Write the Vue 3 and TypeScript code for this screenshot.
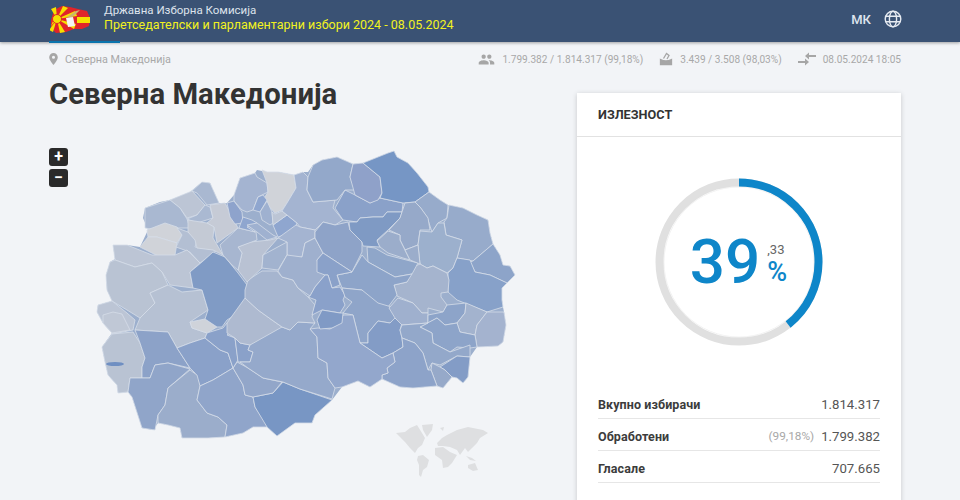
<script setup lang="ts">
interface Region {
  fill: string
  points: string
}

const outline = '257,170 267,172 278,172 294,175 303,172 308,172 313,165 322,160 337,157 353,164 363,163 378,157 388,153 394,151 397,157 408,163 417,173 428,187 429,192 440,200 448,205 463,208 477,215 488,220 490,233 493,244 500,255 503,265 510,266 515,275 507,283 502,288 502,300 503,307 504,312 506,325 503,342 498,346 477,347 470,357 468,377 463,383 457,378 452,377 443,388 437,386 413,388 400,387 382,379 370,387 358,381 342,387 332,400 315,415 312,423 295,422 277,436 267,427 253,427 243,433 225,437 217,433 208,438 182,438 180,428 168,425 158,423 153,430 142,428 132,397 128,392 118,393 117,385 108,375 105,362 102,347 112,333 103,323 97,312 98,305 112,301 107,290 106,275 110,262 115,259 113,245 127,245 140,247 148,230 143,218 145,208 160,202 170,200 190,192 202,182 210,183 219,203 227,203 234,195 240,178 255,173'

const regions: Region[] = [
  { fill: '#a9b8d1', points: '192,191 202,182 210,183 219,203 207,205 197,193' },
  { fill: '#bcc5d5', points: '170,200 192,191 205,205 197,215 187,218 180,208' },
  { fill: '#aab9d2', points: '205,205 210,207 213,218 197,223 187,219 197,215' },
  { fill: '#c6cbd6', points: '210,205 225,203 238,228 217,243 214,227 207,223 213,218' },
  { fill: '#a9b8d1', points: '145,208 170,200 180,208 187,219 190,228 177,228 157,230 145,228' },
  { fill: '#d0d3d9', points: '147,230 165,223 177,227 182,235 177,243 157,237 148,237' },
  { fill: '#d0d3d9', points: '148,237 157,237 177,243 175,255 160,257 140,247' },
  { fill: '#b3bfd3', points: '177,228 188,232 197,240 195,247 217,250 200,263 190,252 176,247 182,235' },
  { fill: '#c4cad5', points: '188,220 207,223 214,227 213,238 223,255 213,250 197,248 195,240 188,232' },
  { fill: '#bcc5d5', points: '113,245 127,245 152,255 175,255 187,250 200,263 190,272 193,288 170,285 162,272 152,263 135,267 115,260' },
  { fill: '#b9c3d3', points: '106,275 110,262 115,260 135,267 152,263 162,272 168,285 150,293 155,303 140,318 127,310 112,301 107,290' },
  { fill: '#b6c1d3', points: '150,293 168,285 182,292 202,290 208,310 190,322 192,328 207,333 205,338 190,343 177,348 168,332 135,330 140,318 155,303' },
  { fill: '#cfd3da', points: '190,322 205,319 217,327 207,333 192,328' },
  { fill: '#809bc5', points: '190,272 202,262 213,252 225,257 238,273 247,285 245,303 235,315 227,320 222,327 217,327 205,319 208,310 202,290 193,288' },
  { fill: '#bcc5d5', points: '97,312 98,305 112,301 127,313 135,320 133,330 113,334 103,323' },
  { fill: '#c0c8d6', points: '103,315 113,312 122,314 130,330 112,333 103,323' },
  { fill: '#b9c3d3', points: '112,334 133,332 140,343 145,358 142,367 142,378 130,378 128,392 118,393 117,385 108,375 105,362 102,347' },
  { fill: '#8ca2c8', points: '135,330 168,332 177,348 190,368 168,363 155,365 150,378 142,378 142,367 145,358 140,343' },
  { fill: '#8aa1c9', points: '177,348 190,343 205,338 220,350 228,353 233,368 213,380 200,386 195,373 190,368' },
  { fill: '#90a5c9', points: '142,378 150,378 155,365 168,363 190,369 168,388 165,405 158,415 155,430 142,428 132,397 128,392 130,378' },
  { fill: '#9badcb', points: '168,388 190,370 197,375 200,386 197,400 207,413 218,417 227,425 225,437 208,438 182,438 180,428 168,425 158,423 158,415 165,405' },
  { fill: '#90a5ca', points: '200,386 213,380 233,368 243,385 245,395 253,397 255,407 267,425 267,427 253,427 243,433 225,437 227,425 218,417 207,413 197,400' },
  { fill: '#7896c4', points: '253,397 273,393 283,382 300,389 332,400 315,415 312,423 295,423 277,436 267,427 255,407' },
  { fill: '#92a6c9', points: '237,362 248,368 263,378 282,382 273,393 253,397 245,395 243,385 233,368' },
  { fill: '#8aa1c9', points: '205,338 207,333 223,328 227,323 233,330 227,335 235,338 238,360 233,368 228,353 220,350' },
  { fill: '#8aa1c9', points: '235,338 240,343 250,345 248,350 253,352 250,362 238,362' },
  { fill: '#aebad0', points: '227,323 245,298 258,310 272,320 282,327 277,335 250,345 240,343 235,338 227,333' },
  { fill: '#95a9cb', points: '250,345 282,327 290,330 298,322 315,323 310,329 317,337 318,358 327,363 328,378 335,388 332,399 300,389 283,382 263,378 248,368 240,362 250,362 253,352 248,350' },
  { fill: '#a6b5cf', points: '245,290 248,280 262,271 277,271 282,277 293,280 298,288 308,297 315,305 312,317 315,323 298,322 290,330 282,327 272,320 258,310 245,298' },
  { fill: '#b9c2d3', points: '238,247 250,242 270,240 278,238 263,255 262,268 247,282 238,270 242,253' },
  { fill: '#a7b6d0', points: '220,245 238,228 256,232 257,240 238,247 242,253 238,270 232,265 223,255' },
  { fill: '#8ea3cc', points: '227,203 234,201 242,212 243,223 235,224 230,217' },
  { fill: '#a4b4d1', points: '234,195 240,178 255,173 257,177 267,183 268,192 258,197 253,210 247,212 242,210 234,201' },
  { fill: '#d0d3d9', points: '262,170 267,172 278,172 294,175 296,188 287,203 282,210 275,213 263,200 268,192 267,183' },
  { fill: '#8fa6cf', points: '239,228 243,217 252,220 257,223 247,227 255,232' },
  { fill: '#8fa6cf', points: '258,197 263,195 267,200 260,212 253,210' },
  { fill: '#9fb1d0', points: '260,212 267,201 272,212 273,223 270,225 262,220' },
  { fill: '#9fb1d0', points: '247,225 257,223 273,235 277,237 267,240 257,232' },
  { fill: '#8fa6cf', points: '273,225 287,215 297,223 293,233 278,237' },
  { fill: '#bcc5d5', points: '272,212 275,214 282,211 287,215 273,225' },
  { fill: '#a4b4d1', points: '294,175 303,172 308,177 307,190 313,202 335,200 333,208 343,220 335,225 323,222 315,230 300,227 297,223 287,215 282,211 287,203 296,188' },
  { fill: '#a4b4d1', points: '278,238 296,225 300,227 315,230 315,238 305,243 302,257 293,257 287,255 287,242' },
  { fill: '#a2b3cf', points: '262,268 263,255 287,242 287,255 278,270' },
  { fill: '#9fb0ce', points: '278,271 287,255 302,257 305,243 315,238 323,253 317,260 320,272 325,275 315,287 310,296 298,288 293,280 282,277' },
  { fill: '#8ea3c8', points: '315,238 315,232 323,222 335,225 348,222 350,230 362,242 362,252 352,272 323,253' },
  { fill: '#8aa1c9', points: '335,208 345,190 355,195 370,203 380,198 403,203 402,212 387,212 383,217 373,217 360,218 357,222 343,220' },
  { fill: '#7f9ac4', points: '349,222 357,222 360,218 373,217 383,217 387,212 402,212 400,218 388,230 377,240 380,247 363,246 362,242 350,230' },
  { fill: '#93a8ca', points: '308,177 313,165 322,160 337,157 353,164 350,177 355,190 345,190 337,200 313,202 307,190' },
  { fill: '#8fa1c9', points: '353,164 363,163 380,177 382,193 378,200 370,203 355,195 350,177' },
  { fill: '#7696c5', points: '363,163 378,157 388,153 394,151 397,157 408,163 417,173 428,187 429,192 415,202 403,203 380,198 382,193 380,177' },
  { fill: '#97abcb', points: '415,202 429,192 440,200 448,205 447,218 438,223 432,232 427,217 420,207' },
  { fill: '#96a9c9', points: '405,203 415,202 420,207 428,218 430,230 420,230 418,245 405,250 400,240 400,235 389,230 400,218' },
  { fill: '#97abcb', points: '449,205 463,208 477,215 488,220 490,233 493,244 473,261 457,258 462,240 446,235 444,222 447,218' },
  { fill: '#9cb0cd', points: '420,231 432,232 438,223 444,223 446,235 462,240 457,258 453,268 447,273 433,266 427,268 420,264 418,245' },
  { fill: '#8da4c9', points: '470,262 473,261 493,244 500,255 503,265 510,266 515,275 507,283 490,275 475,272' },
  { fill: '#87a1c9', points: '448,273 453,268 457,258 470,260 475,272 490,275 507,283 502,288 502,300 503,307 487,312 467,304 457,300 448,292' },
  { fill: '#a5b4ce', points: '394,285 407,282 413,267 420,264 427,268 433,266 447,273 449,280 448,292 441,293 441,297 447,305 443,312 428,308 428,313 422,313 413,303 397,296' },
  { fill: '#8fa6c9', points: '367,247 375,248 387,255 418,263 412,274 395,277 368,262' },
  { fill: '#9badcb', points: '377,241 388,231 400,235 400,240 405,250 410,260 403,258 388,253 380,247' },
  { fill: '#9badcb', points: '405,250 418,245 420,264 410,260' },
  { fill: '#8da4c9', points: '352,272 362,255 368,262 395,277 412,274 407,282 394,285 397,295 388,307 373,303 362,290 342,288 337,275' },
  { fill: '#8aa1c9', points: '323,253 352,272 337,275 340,285 332,288 328,275 325,275 317,272 317,260' },
  { fill: '#8aa1ca', points: '325,275 328,275 332,288 340,287 345,295 343,300 345,305 340,313 322,310 312,315 316,300 308,297 310,296 315,287' },
  { fill: '#8fa5c9', points: '342,288 362,290 378,303 395,308 398,318 390,323 378,321 368,333 368,343 360,343 353,315 343,313 352,302 345,297' },
  { fill: '#839cc6', points: '368,333 378,321 390,323 395,318 402,323 400,330 402,338 403,347 393,353 382,358 360,343 368,343' },
  { fill: '#9fb0ce', points: '398,298 413,303 422,313 428,313 428,323 402,325 395,318 389,308' },
  { fill: '#8da4c9', points: '428,315 443,312 447,305 466,303 465,313 457,323 445,325 437,318 428,323' },
  { fill: '#a3b3ce', points: '466,303 487,312 477,325 475,335 460,332 457,323 465,313' },
  { fill: '#a4b3cf', points: '487,312 504,312 506,325 503,342 498,346 477,347 475,335 477,325' },
  { fill: '#8da4c9', points: '420,327 437,318 445,325 457,323 460,332 475,335 477,347 470,348 457,347 450,352 433,343 432,333' },
  { fill: '#93a8ca', points: '400,330 402,325 428,323 420,327 432,333 433,343 450,352 470,345 470,357 457,356 440,365 432,363 428,370 423,353 415,343 402,338' },
  { fill: '#839cc6', points: '440,367 457,356 470,357 468,377 463,383 457,378 452,377 445,370' },
  { fill: '#96a9c9', points: '432,363 440,367 445,370 452,377 443,388 437,386 431,370' },
  { fill: '#8da3c9', points: '402,338 415,343 423,353 428,370 431,370 437,386 413,388 400,387 382,379 382,375 388,373 387,368 395,362 393,353 403,347' },
  { fill: '#93a7cc', points: '317,337 318,358 327,363 328,378 335,388 342,387 358,381 370,387 382,379 382,375 388,373 387,368 395,362 393,353 382,358 360,343 353,315 343,315 340,323 330,329 318,328 310,329' },
  { fill: '#809ac5', points: '317,320 322,310 340,313 343,313 342,323 332,328 320,329' }
]

const world: string[] = [
  '396,433 405,432 410,428 417,425 422,433 425,438 422,445 418,448 415,453 410,448 405,442 400,437',
  '422,425 433,424 432,430 427,437 423,430',
  '418,456 423,455 429,460 427,467 423,470 421,477 419,475 419,465 417,460',
  '435,448 443,447 450,452 457,455 452,463 448,467 443,468 442,460 435,455',
  '437,443 442,438 447,435 457,430 468,427 483,430 488,433 480,438 477,443 472,448 468,452 465,448 460,455 457,450 450,447 443,446 438,446',
  '468,465 475,463 478,470 473,471 468,468',
  '466,456 472,458 476,461 470,460',
  '440,428 444,427 443,431'
]

const sunRays: string[] = [
  '57,19 51,9 56,7',
  '57,19 63,6 68,8',
  '57,19 75,11 77,16',
  '57,19 76,24 74,29',
  '57,19 65,32 60,33',
  '57,19 53,32 49,30',
  '57,19 51,26 53,21'
]

const stats = [
  { label: 'Вкупно избирачи', value: '1.814.317', note: '' },
  { label: 'Обработени', value: '1.799.382', note: '(99,18%)' },
  { label: 'Гласале', value: '707.665', note: '' }
]

const radius = 79.5
const circumference = 2 * Math.PI * radius
const dash = `${(circumference * 39.33) / 100} ${circumference}`
</script>

<template>
  <div class="page">
    <header class="topbar">
      <div class="brand">
        <svg class="logo" viewBox="50 4 42 31" width="42" height="31">
          <path d="M51 20 L54 10 L62 6 L70 7 L78 9 L87 11 L90 18 L89 26 L82 29 L74 29 L66 32 L56 33 L51 28Z" fill="#e0242a" />
          <polygon v-for="ray in sunRays" :key="ray" :points="ray" fill="#f6e000" />
          <rect x="77" y="17" width="13" height="6" fill="#f6e000" />
          <circle cx="57" cy="19" r="4.5" fill="#f6e000" stroke="#e0242a" />
          <path d="M67 17 L76 11 L80 10 L76 14 L71 18Z" fill="#cbb66c" />
          <path d="M66 18 L73 17 L75 26 L68 27Z" fill="#f4f4f4" />
        </svg>
        <div class="titles">
          <div class="org">Државна Изборна Комисија</div>
          <div class="election">Претседателски и парламентарни избори 2024 - 08.05.2024</div>
        </div>
      </div>
      <div class="lang">
        <span>МК</span>
        <svg viewBox="0 0 18 18" width="18" height="18" fill="none" stroke="#e6ebf2" stroke-width="1.4">
          <circle cx="9" cy="9" r="7.8" />
          <ellipse cx="9" cy="9" rx="3.6" ry="7.8" />
          <path d="M1.8 6.2H16.2M1.8 11.8H16.2" />
        </svg>
      </div>
      <div class="tab-line"></div>
    </header>

    <div class="meta">
      <div class="crumb">
        <svg viewBox="0 0 10 14" width="9" height="12">
          <path d="M5 0a5 5 0 0 0-5 5c0 3.6 5 9 5 9s5-5.400 5-9a5 5 0 0 0-5-5zm0 6.800A1.800 1.800 0 1 1 5 3.200a1.800 1.800 0 0 1 0 3.600z" fill="#a6a6a6" />
        </svg>
        <span>Северна Македонија</span>
      </div>
      <div class="counters">
        <div class="counter">
          <svg viewBox="0 0 24 24" width="17" height="17" fill="#a6a6a6">
            <path d="M16 11c1.700 0 3-1.300 3-3s-1.300-3-3-3-3 1.300-3 3 1.300 3 3 3zm-8 0c1.700 0 3-1.300 3-3S9.700 5 8 5 5 6.300 5 8s1.300 3 3 3zm0 2c-2.300 0-7 1.200-7 3.500V19h14v-2.500C15 14.200 10.300 13 8 13zm8 0h-1c1.200.800 2 2 2 3.500V19h6v-2.500c0-2.300-4.700-3.500-7-3.500z" />
          </svg>
          <span>1.799.382 / 1.814.317 (99,18%)</span>
        </div>
        <div class="counter">
          <svg viewBox="0 0 14 14" width="14" height="14" fill="none" stroke="#a6a6a6" stroke-width="1.300">
            <path d="M4.500 6.500 L7.500 1.500 L10 3.500 L8 7" />
            <path d="M1.500 7.500 V12.500 H12.500 V7.500 Q7 10.500 1.500 7.500Z" fill="#a6a6a6" />
          </svg>
          <span>3.439 / 3.508 (98,03%)</span>
        </div>
        <div class="counter">
          <svg viewBox="0 0 18 14" width="18" height="14" fill="#a6a6a6">
            <path d="M0 9h7V6.500l4 3.500-4 3.500V11H0zM18 3h-7V.500L7 4l4 3.500V5h7z" />
          </svg>
          <span>08.05.2024 18:05</span>
        </div>
      </div>
    </div>

    <main class="content">
      <section class="map-side">
        <h1>Северна Македонија</h1>
        <div class="map-wrap">
          <div class="zoom-btns">
            <button type="button">+</button>
            <button type="button">−</button>
          </div>
          <svg class="map" viewBox="90 140 430 340" width="430" height="340">
            <polygon :points="outline" fill="#9cafcd" />
            <polygon
              v-for="region in regions"
              :key="region.points"
              :points="region.points"
              :fill="region.fill"
              stroke="#d6dde9"
              stroke-width="0.8"
              stroke-linejoin="round"
            />
            <ellipse cx="115" cy="364" rx="9" ry="2" fill="#6f8fc2" />
            <polygon v-for="land in world" :key="land" :points="land" fill="#dedfe1" />
          </svg>
        </div>
      </section>

      <aside class="card">
        <div class="card-title">ИЗЛЕЗНОСТ</div>
        <div class="gauge">
          <svg viewBox="0 0 168 168" width="168" height="168">
            <circle cx="84" cy="84" :r="radius" fill="none" stroke="#e0e0e0" stroke-width="8" />
            <circle cx="84" cy="84" r="75" fill="none" stroke="#000" stroke-opacity="0.05" stroke-width="1" />
            <circle
              cx="84"
              cy="84"
              :r="radius"
              fill="none"
              stroke="#0e86c9"
              stroke-width="8"
              :stroke-dasharray="dash"
              transform="rotate(-90 84 84)"
            />
          </svg>
          <div class="percent">
            <span class="whole">39</span>
            <span class="rest">
              <span class="decimals">,33</span>
              <span class="sign">%</span>
            </span>
          </div>
        </div>
        <div v-for="row in stats" :key="row.label" class="stat">
          <span class="stat-label">{{ row.label }}</span>
          <span class="stat-note">{{ row.note }}</span>
          <span class="stat-value">{{ row.value }}</span>
        </div>
      </aside>
    </main>
  </div>
</template>

<style scoped>
.page {
  width: 960px;
  height: 500px;
  overflow: hidden;
  background: #f2f4f7;
  font-family: Roboto, "Liberation Sans", sans-serif;
}

.topbar {
  position: relative;
  display: flex;
  justify-content: space-between;
  align-items: center;
  height: 42px;
  padding: 0 58px 0 50px;
  box-sizing: border-box;
  background: #3a5274;
  box-shadow: 0 1px 3px rgba(0, 0, 0, 0.35);
}

.tab-line {
  position: absolute;
  left: 49px;
  bottom: -1px;
  width: 71px;
  height: 2px;
  background: #0b74ad;
}

.brand {
  display: flex;
  align-items: center;
  gap: 12px;
}

.logo {
  display: block;
  margin-top: -4px;
}

.titles {
  margin-top: -6px;
}

.org {
  font-size: 11.5px;
  line-height: 13px;
  color: #dde3ec;
}

.election {
  font-size: 12.5px;
  line-height: 15px;
  color: #f2f21e;
}

.lang {
  display: flex;
  align-items: center;
  gap: 13px;
  margin-top: -4px;
  font-size: 13px;
  font-weight: 500;
  color: #dfe5ee;
}

.lang svg {
  display: block;
}

.meta {
  display: flex;
  justify-content: space-between;
  align-items: center;
  height: 34px;
  padding: 0 59px 0 49px;
  color: #a8a8a8;
}

.crumb {
  display: flex;
  align-items: center;
  gap: 7px;
  font-size: 10.8px;
}

.counters {
  display: flex;
  gap: 16px;
  font-size: 10.1px;
}

.counter {
  display: flex;
  align-items: center;
  gap: 7px;
}

.counter svg,
.crumb svg {
  display: block;
}

.content {
  display: flex;
  justify-content: space-between;
  padding: 0 59px 0 49px;
}

h1 {
  margin: 1px 0 0;
  font-size: 29.3px;
  line-height: 34px;
  font-weight: 700;
  color: #333;
}

.map-wrap {
  position: relative;
  padding: 29px 0 0 41px;
}

.map {
  display: block;
  filter: blur(0.4px);
}

.zoom-btns {
  position: absolute;
  left: 0;
  top: 37px;
  display: flex;
  flex-direction: column;
  gap: 3px;
}

.zoom-btns button {
  width: 19px;
  height: 18px;
  padding: 0;
  border: 0;
  border-radius: 3px;
  background: #2a2a2a;
  color: #fff;
  font-family: Roboto, "Liberation Sans", sans-serif;
  font-size: 16px;
  font-weight: 700;
  line-height: 18px;
}

.card {
  width: 324px;
  height: 440px;
  margin-top: 17px;
  box-sizing: border-box;
  background: #fff;
  box-shadow: 0 1px 5px rgba(0, 0, 0, 0.18);
}

.card-title {
  height: 44px;
  padding-left: 21px;
  box-sizing: border-box;
  border-bottom: 1px solid #e2e2e2;
  font-size: 12.7px;
  font-weight: 700;
  line-height: 43px;
  color: #333;
}

.gauge {
  position: relative;
  display: flex;
  justify-content: center;
  height: 168px;
  margin: 41px 0 41px -1px;
}

.gauge > svg {
  display: block;
}

.percent {
  position: absolute;
  inset: 0;
  display: flex;
  justify-content: center;
  align-items: center;
  gap: 7px;
  color: #0e86c9;
}

.whole {
  font-size: 62px;
  font-weight: 500;
  line-height: 1;
}

.rest {
  display: flex;
  flex-direction: column;
  margin-top: 4px;
}

.decimals {
  font-size: 13px;
  line-height: 15px;
  color: #666;
}

.sign {
  font-size: 27px;
  font-weight: 500;
  line-height: 30px;
}

.stat {
  display: flex;
  align-items: center;
  height: 32px;
  margin: 0 21px;
  padding-top: 3px;
  box-sizing: border-box;
  border-bottom: 1px solid #e6e6e6;
}

.stat-label {
  flex: 1;
  font-size: 12.5px;
  font-weight: 700;
  letter-spacing: 0.1px;
  color: #3c3c3c;
}

.stat-note {
  margin-right: 7px;
  font-size: 11.8px;
  color: #a8a8a8;
}

.stat-value {
  font-size: 13.2px;
  color: #555;
}
</style>
